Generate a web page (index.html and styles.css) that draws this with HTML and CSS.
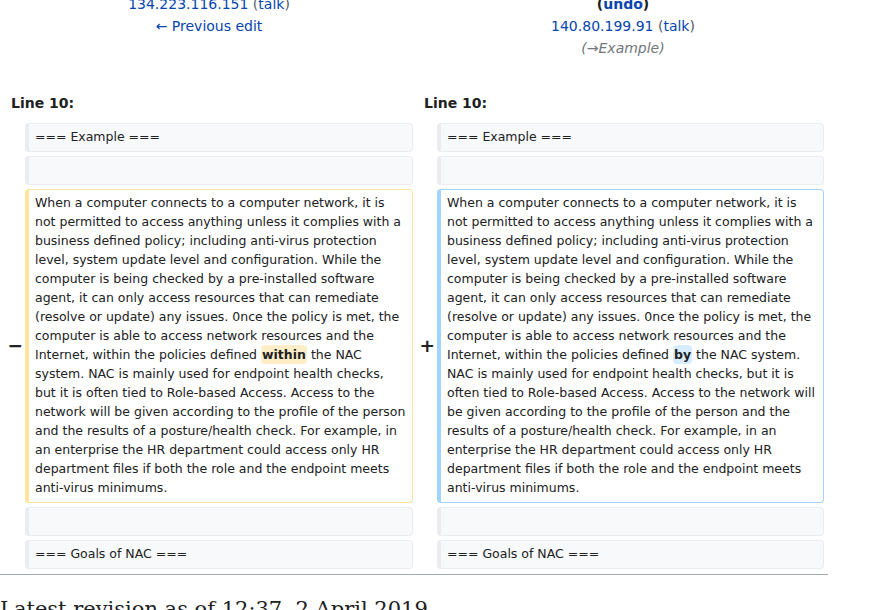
FILE: index.html
```html
<!DOCTYPE html>
<html>
<head>
<meta charset="utf-8">
<link rel="stylesheet" href="styles.css">
</head>
<body>
<div class="page">
  <div class="diff-header">
    <div class="side">
      <div><a class="link">134.223.116.151</a> <span class="paren">(<a class="link">talk</a>)</span></div>
      <div><a class="link">← Previous edit</a></div>
    </div>
    <div class="side">
      <div class="bold"><span class="paren">(</span><a class="link">undo</a><span class="paren">)</span></div>
      <div><a class="link">140.80.199.91</a> <span class="paren">(<a class="link">talk</a>)</span></div>
      <div class="comment">(<a class="arrow">→</a>Example)</div>
    </div>
  </div>

  <div class="diff-grid">
    <div class="lineno left">Line 10:</div>
    <div class="lineno right">Line 10:</div>

    <div class="marker"></div>
    <div class="cell context">=== Example ===</div>
    <div class="marker"></div>
    <div class="cell context">=== Example ===</div>

    <div class="marker"></div>
    <div class="cell context empty"></div>
    <div class="marker"></div>
    <div class="cell context empty"></div>

    <div class="marker">−</div>
    <div class="cell deleted">When a computer connects to a computer network, it is not permitted to access anything unless it complies with a business defined policy; including anti-virus protection level, system update level and configuration. While the computer is being checked by a pre-installed software agent, it can only access resources that can remediate (resolve or update) any issues. 0nce the policy is met, the computer is able to access network resources and the Internet, within the policies defined <del class="del">within</del> the NAC system. NAC is mainly used for endpoint health checks, but it is often tied to Role-based Access. Access to the network will be given according to the profile of the person and the results of a posture/health check. For example, in an enterprise the HR department could access only HR department files if both the role and the endpoint meets anti-virus minimums.</div>
    <div class="marker">+</div>
    <div class="cell added">When a computer connects to a computer network, it is not permitted to access anything unless it complies with a business defined policy; including anti-virus protection level, system update level and configuration. While the computer is being checked by a pre-installed software agent, it can only access resources that can remediate (resolve or update) any issues. 0nce the policy is met, the computer is able to access network resources and the Internet, within the policies defined <ins class="ins">by</ins> the NAC system. NAC is mainly used for endpoint health checks, but it is often tied to Role-based Access. Access to the network will be given according to the profile of the person and the results of a posture/health check. For example, in an enterprise the HR department could access only HR department files if both the role and the endpoint meets anti-virus minimums.</div>

    <div class="marker"></div>
    <div class="cell context empty"></div>
    <div class="marker"></div>
    <div class="cell context empty"></div>

    <div class="marker"></div>
    <div class="cell context">=== Goals of NAC ===</div>
    <div class="marker"></div>
    <div class="cell context">=== Goals of NAC ===</div>
  </div>

  <hr class="diff-hr">
  <h2 class="latest">Latest revision as of 12:37, 2 April 2019</h2>
</div>
</body>
</html>
```

FILE: styles.css
```css
html, body {
  margin: 0;
  padding: 0;
  background: #ffffff;
  overflow: hidden;
}
body {
  font-family: "DejaVu Sans", sans-serif;
  color: #202122;
  font-size: 14px;
}
.page {
  width: 828px;
  margin-top: -7px;
}
.diff-header {
  display: grid;
  grid-template-columns: 418px 410px;
  line-height: 22px;
  text-align: center;
}
.link {
  color: #0645ad;
  text-decoration: none;
}
.paren {
  color: #54595d;
}
.bold {
  font-weight: bold;
}
.bold .paren {
  color: #202122;
}
.comment {
  font-style: italic;
  color: #72777d;
}
.arrow {
  color: #72777d;
  text-decoration: none;
}
.diff-grid {
  display: grid;
  grid-template-columns: 25px 388px 24px 387px;
  row-gap: 4px;
  margin-top: 33px;
}
.lineno {
  font-weight: bold;
  line-height: 22px;
  padding-left: 11px;
  margin-bottom: 5px;
}
.lineno.left {
  grid-column: 1 / span 2;
}
.lineno.right {
  grid-column: 3 / span 2;
}
.marker {
  display: flex;
  align-items: center;
  justify-content: flex-end;
  padding-right: 2px;
  font-size: 18.5px;
  font-weight: bold;
  line-height: 1;
}
.cell {
  font-size: 12.5px;
  line-height: 19px;
  padding: 3px 4px 5px 6px;
  border-style: solid;
  border-width: 1px 1px 1px 4px;
  border-radius: 4px;
  word-wrap: break-word;
}
.context {
  background: #f8f9fa;
  border-color: #eaecf0;
}
.empty {
  height: 19px;
}
.deleted {
  background: #ffffff;
  border-color: #ffe49c;
}
.added {
  background: #ffffff;
  border-color: #a3d3ff;
}
.del {
  background: #feeec8;
  font-weight: bold;
  text-decoration: none;
  border-radius: 4px;
  padding: 2px 1px;
}
.ins {
  background: #d8ecff;
  font-weight: bold;
  text-decoration: none;
  border-radius: 4px;
  padding: 2px 1px;
}
.diff-hr {
  margin: 5px 0 0 0;
  border: 0;
  height: 1px;
  background: #a2a9b1;
}
.latest {
  font-family: "DejaVu Serif", serif;
  font-weight: normal;
  font-size: 21px;
  margin: 21px 0 0 0;
  line-height: 1.3;
}
```
